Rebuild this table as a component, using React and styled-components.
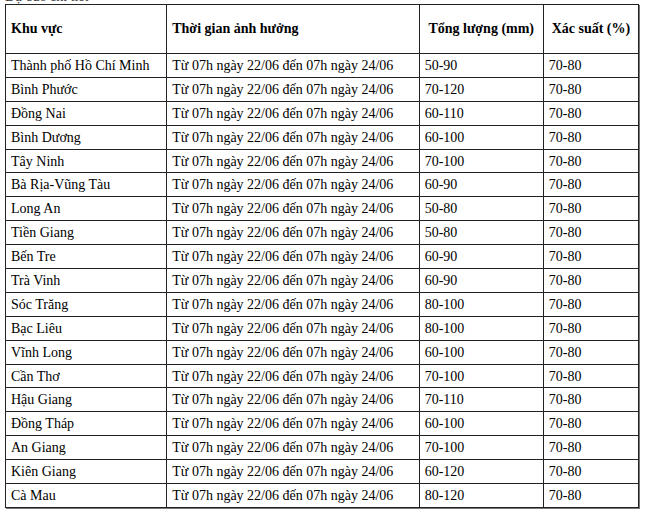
import React from "react";
import styled, { createGlobalStyle } from "styled-components";

const Global = createGlobalStyle`
  html, body { margin: 0; padding: 0; background: #fff; }
  body { font-family: "Liberation Serif", "Times New Roman", serif; color: #000; }
`;

const Page = styled.div`
  padding: 0 0 0 5px;
  width: 645px;
  height: 514px;
  overflow: hidden;
  box-sizing: border-box;
`;

const Caption = styled.div`
  font-size: 14px;
  line-height: 16px;
  margin-top: -11px;
  height: 15px;
  color: #333;
`;

const Table = styled.table`
  border-collapse: collapse;
  width: 634px;
  table-layout: fixed;
  font-size: 14px;
  box-shadow: 1px 1px 0 #777;
`;

const Col = styled.col``;

const HeadCell = styled.th`
  border: 1px solid #222;
  height: 48px;
  padding: 0 5px;
  font-weight: bold;
  text-align: ${(p) => (p.$center ? "center" : "left")};
  vertical-align: middle;
  white-space: nowrap;
`;

const Cell = styled.td`
  border: 1px solid #222;
  height: 22.9px;
  padding: 0 5px;
  vertical-align: middle;
  white-space: nowrap;
  line-height: 17px;
`;

const rows = [
  ["Thành phố Hồ Chí Minh", "50-90"],
  ["Bình Phước", "70-120"],
  ["Đồng Nai", "60-110"],
  ["Bình Dương", "60-100"],
  ["Tây Ninh", "70-100"],
  ["Bà Rịa-Vũng Tàu", "60-90"],
  ["Long An", "50-80"],
  ["Tiền Giang", "50-80"],
  ["Bến Tre", "60-90"],
  ["Trà Vinh", "60-90"],
  ["Sóc Trăng", "80-100"],
  ["Bạc Liêu", "80-100"],
  ["Vĩnh Long", "60-100"],
  ["Cần Thơ", "70-100"],
  ["Hậu Giang", "70-110"],
  ["Đồng Tháp", "60-100"],
  ["An Giang", "70-100"],
  ["Kiên Giang", "60-120"],
  ["Cà Mau", "80-120"],
];

export default function App() {
  return (
    <Page>
      <Global />
      <Caption>Dự báo chi tiết</Caption>
      <Table>
        <colgroup>
          <Col style={{ width: 161 }} />
          <Col style={{ width: 252 }} />
          <Col style={{ width: 124 }} />
          <Col style={{ width: 95 }} />
        </colgroup>
        <thead>
          <tr>
            <HeadCell>Khu vực</HeadCell>
            <HeadCell>Thời gian ảnh hưởng</HeadCell>
            <HeadCell $center>Tổng lượng (mm)</HeadCell>
            <HeadCell $center>Xác suất (%)</HeadCell>
          </tr>
        </thead>
        <tbody>
          {rows.map(([area, amount]) => (
            <tr key={area}>
              <Cell>{area}</Cell>
              <Cell>Từ 07h ngày 22/06 đến 07h ngày 24/06</Cell>
              <Cell>{amount}</Cell>
              <Cell>70-80</Cell>
            </tr>
          ))}
        </tbody>
      </Table>
    </Page>
  );
}
